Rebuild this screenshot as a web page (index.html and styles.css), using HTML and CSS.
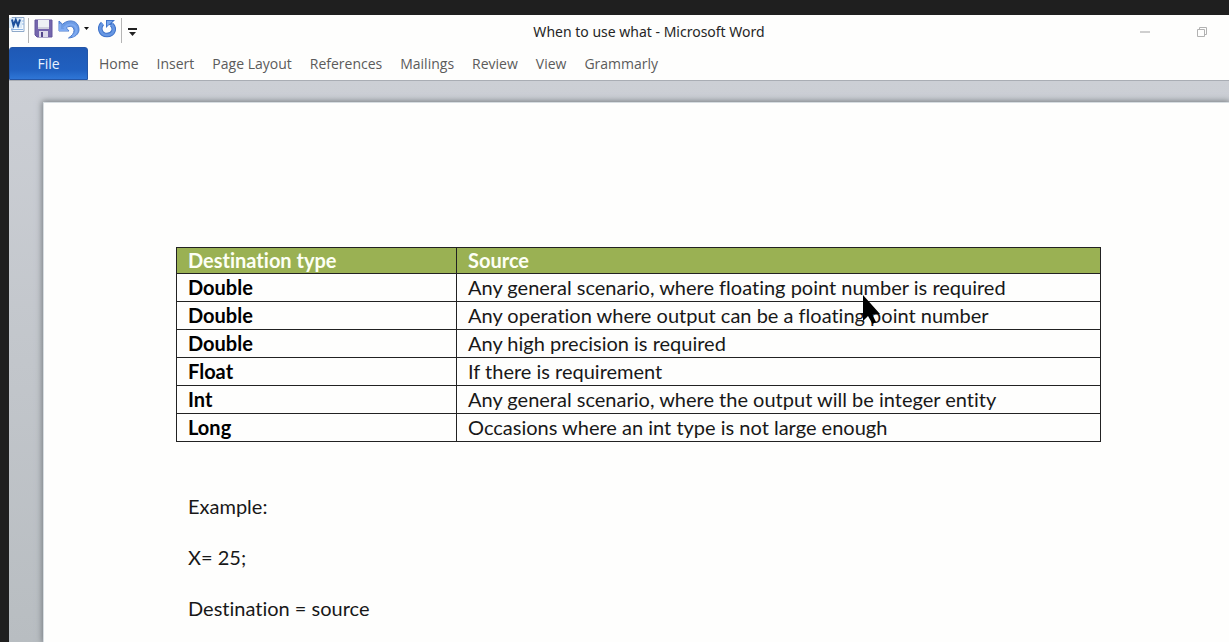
FILE: index.html
```html
<!DOCTYPE html>
<html lang="en">
<head>
<meta charset="utf-8">
<title>When to use what - Microsoft Word</title>
<link rel="stylesheet" href="styles.css">
</head>
<body>
<div class="window">
  <header class="titlebar">
    <div class="quick-access">
      <svg class="word-icon" width="16" height="16" viewBox="0 0 16 16" aria-hidden="true">
        <path d="M3 .5h12v14H3z" fill="#f7fbff" stroke="#8fa9c9"/>
        <path d="M13 4h2M13 7h2M2 12.500h12" stroke="#8db4e2"/>
        <path d="M0 1h13v10H0z" fill="#d9e9f8"/>
        <path d="M3 2.500l1.500 6 2.300-5.500 2.200 5.500 2-6" fill="none" stroke="#1d4f9c" stroke-width="2"/>
      </svg>
      <span class="divider"></span>
      <button class="tool" aria-label="Save">
        <svg width="19" height="19" viewBox="0 0 19 19">
          <path d="M1 1h17v17H3l-2-2z" fill="#7566ad" stroke="#65569c"/>
          <path d="M4 1h11v9H4z" fill="#edf0f5"/>
          <path d="M4 8h11v2H4z" fill="#cfd0dd"/>
          <path d="M5 12h9v6H5z" fill="#dedbea"/>
          <path d="M7 13h2v5H7z" fill="#54478b"/>
        </svg>
      </button>
      <button class="tool" aria-label="Undo">
        <svg width="22" height="21" viewBox="0 0 22 21">
          <path d="M1 2v10h10L8.200 8.800C12 6 16 7.500 16 11.500c0 3-2 5-5.500 7.500C17 18.500 21 15 21 10.500 21 2 11.500-1 4.500 5.200z" fill="#6c9be4" stroke="#4a7bcd"/>
          <path d="M2 5v6h6.500L6.500 8.500C11 3.500 18 5 18.500 11c0 3-2 5-4 6.500" fill="none" stroke="#7eaaf0" stroke-width="2"/>
        </svg>
      </button>
      <button class="tool arrow" aria-label="Undo history">
        <svg width="6" height="4" viewBox="0 0 6 4"><path d="M0 0h5L2.500 3z" fill="#111"/></svg>
      </button>
      <button class="tool redo" aria-label="Repeat">
        <svg width="18" height="19" viewBox="0 0 18 19">
          <path d="M4.500 4.500C.5 8 2 16 9 16s8.500-7 4.500-10.500" fill="none" stroke="#3f73c9" stroke-width="4.600"/>
          <path d="M8 1h9l-3 3 1 3-4-1-3 3z" fill="#3f73c9"/>
          <path d="M4.500 4.500C.5 8 2 16 9 16s8.500-7 4.500-10.500" fill="none" stroke="#6797e3" stroke-width="2.600"/>
          <path d="M9 2h5.500L12 4.500 9 7z" fill="#78a7ec"/>
        </svg>
      </button>
      <span class="divider"></span>
      <button class="tool customize" aria-label="Customize Quick Access Toolbar">
        <svg width="10" height="9" viewBox="0 0 10 9"><path d="M0 0h9v2H0zM1 4h7L4.500 8z" fill="#222"/></svg>
      </button>
    </div>
    <h1 class="title">When to use what - Microsoft Word</h1>
    <div class="controls">
      <button class="tool" aria-label="Minimize"><svg width="11" height="12" viewBox="0 0 11 12"><path d="M0 6h10" stroke="#cfcfcf" stroke-width="2"/></svg></button>
      <button class="tool" aria-label="Restore"><svg width="11" height="12" viewBox="0 0 11 12"><path d="M.5 3.500h7v7h-7zM2.500 3V1.500h7v7H8" fill="none" stroke="#b2b2b2"/></svg></button>
    </div>
  </header>
  <nav class="ribbon">
    <button class="tab file">File</button>
    <button class="tab">Home</button>
    <button class="tab">Insert</button>
    <button class="tab">Page Layout</button>
    <button class="tab">References</button>
    <button class="tab">Mailings</button>
    <button class="tab">Review</button>
    <button class="tab">View</button>
    <button class="tab">Grammarly</button>
  </nav>
  <main class="workspace">
    <article class="page">
      <table class="types">
        <thead>
          <tr><th scope="col">Destination type</th><th scope="col">Source</th></tr>
        </thead>
        <tbody>
          <tr><th scope="row">Double</th><td>Any general scenario, where floating point number is required</td></tr>
          <tr><th scope="row">Double</th><td>Any operation where output can be a floating point number</td></tr>
          <tr><th scope="row">Double</th><td>Any high precision is required</td></tr>
          <tr><th scope="row">Float</th><td>If there is requirement</td></tr>
          <tr><th scope="row">Int</th><td>Any general scenario, where the output will be integer entity</td></tr>
          <tr><th scope="row">Long</th><td>Occasions where an int type is not large enough</td></tr>
        </tbody>
      </table>
      <div class="notes">
        <p>Example:</p>
        <p>X= 25;</p>
        <p>Destination = source</p>
      </div>
    </article>
  </main>
</div>
<svg class="pointer" width="20" height="32" viewBox="0 0 20 32" aria-hidden="true"><path d="M1 1v26l5-5 4.500 8 3.500-2-4-8h8z" fill="#000"/></svg>
</body>
</html>
```
FILE: styles.css
```css
* { box-sizing: border-box; }
body {
  margin: 0;
  min-height: 100vh;
  display: flex;
  padding: 15px 0 0 9px;
  background: #1f1f1f;
  overflow: hidden;
}
.window {
  flex: 1;
  display: flex;
  flex-direction: column;
  background: #fefefd;
  font-family: "Open Sans", sans-serif;
}
.titlebar {
  display: grid;
  grid-template-columns: 1fr auto 1fr;
  height: 32px;
}
.quick-access { display: flex; align-items: flex-start; }
.word-icon { margin-top: 2px; }
.divider {
  width: 1px;
  height: 25px;
  margin: 3px 5px 0 3px;
  background: #b5b5b5;
}
.tool {
  display: flex;
  padding: 0;
  border: 0;
  background: none;
}
.quick-access .tool { margin-top: 4px; }
.quick-access .tool + .tool { margin-left: 5px; }
.quick-access .tool.arrow { margin: 12px 0 0 4px; }
.quick-access .tool.redo { margin: 4px 2px 0 8px; }
.quick-access .tool.customize { margin: 13px 0 0 1px; }
.title {
  margin: 0;
  padding-left: 60px;
  font-size: 14px;
  font-weight: 400;
  line-height: 34px;
  font-family: "Noto Sans", sans-serif;
  color: #262626;
}
.controls {
  display: flex;
  justify-content: flex-end;
  align-items: center;
  gap: 46px;
  padding: 0 21px 0 0;
}
.ribbon {
  display: flex;
  height: 34px;
  border-bottom: 1px solid #a9adb4;
}
.tab {
  padding: 0 9px;
  border: 0;
  background: none;
  font: 14px/34px "Open Sans", sans-serif;
  color: #5b5b5b;
}
.tab.file {
  width: 79px;
  margin-right: 2px;
  border: 1px solid #2356a8;
  border-radius: 3px 3px 0 0;
  background: linear-gradient(#1f59b5, #2060c0 70%, #2f76d6);
  line-height: 30px;
  color: #e8f1ff;
}
.workspace {
  flex: 1;
  display: flex;
  padding: 21px 0 0 34px;
  background: linear-gradient(#cccfd5, #b8bdc1);
}
.page {
  flex: 1;
  padding: 144px 128px 0 132px;
  border: solid #d7dde1;
  border-width: 1px 0 0 1px;
  background: #fefefd;
  box-shadow: 0 0 6px 1px #787d82;
  font: 20px/24px Lato, sans-serif;
  font-variant-ligatures: none;
  color: #181818;
}
.types {
  width: 100%;
  height: 195px;
  border-collapse: collapse;
  table-layout: fixed;
}
.types th, .types td {
  padding: 0 11px 1px;
  border: 1px solid #222;
  text-align: left;
}
.types th:first-child { width: 280px; }
.types thead th { background: #9ab153; color: #fdfff5; }
.types tbody th { color: #000; }
.notes {
  display: grid;
  gap: 27px;
  padding: 52px 12px 0;
}
.notes p { margin: 0; }
.pointer {
  position: absolute;
  left: 862px;
  top: 294px;
}
```
